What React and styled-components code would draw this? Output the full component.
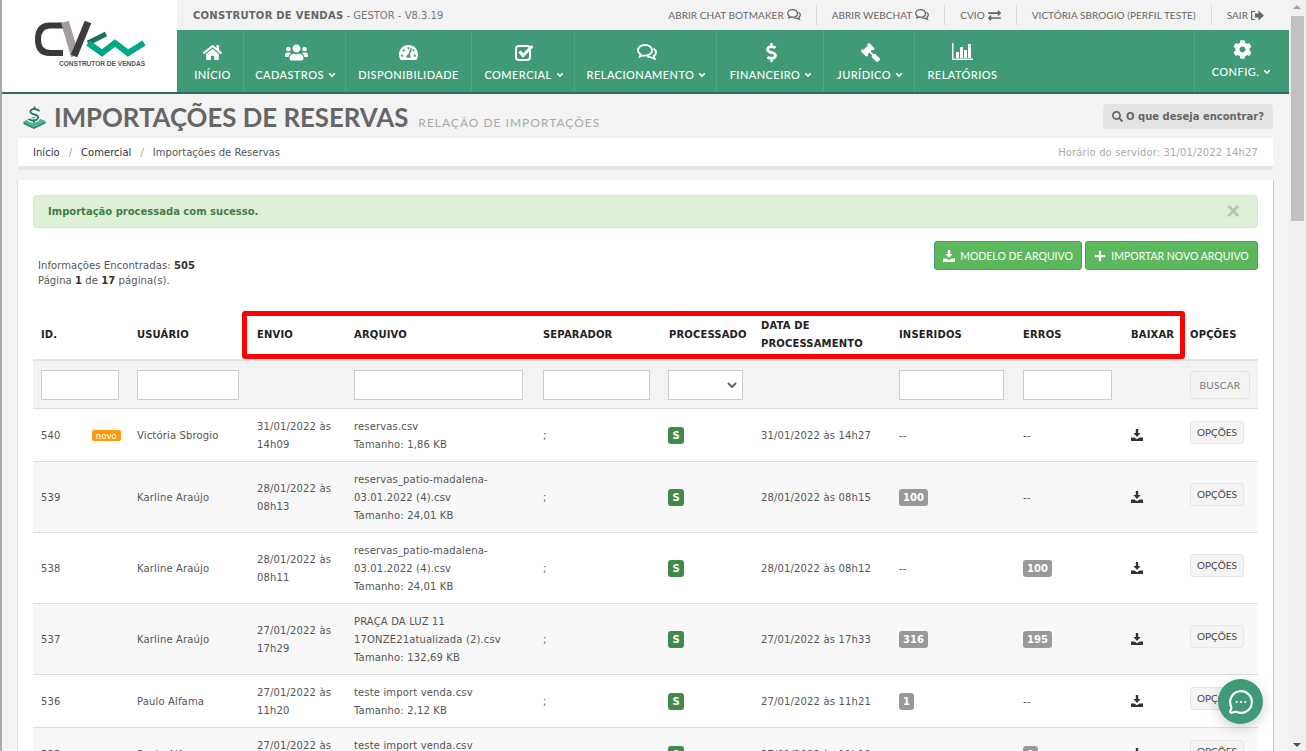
import React from "react";
import styled, { createGlobalStyle } from "styled-components";
import {
  FaHome,
  FaUsers,
  FaTachometerAlt,
  FaDollarSign,
  FaGavel,
  FaCog,
  FaAngleDown,
  FaExchangeAlt,
  FaSearch,
  FaPlus,
} from "react-icons/fa";
import { MessageCircleMore } from "lucide-react";

const GlobalStyle = createGlobalStyle`
  html, body { margin: 0; padding: 0; height: 100%; overflow: hidden; }
  body { background: #f3f3f3; font-family: "DejaVu Sans", Verdana, sans-serif; font-size: 10px; color: #444; }
  * { box-sizing: border-box; }
`;

const Window = styled.div`
  position: relative;
  width: 1306px;
  height: 751px;
  display: flex;
  overflow: hidden;
  background: #f3f3f3;
  border-left: 2px solid #a8a8a8;
`;

const Main = styled.div`
  width: 1287px;
  flex: none;
`;

/* ---------- header ---------- */
const Header = styled.header`
  display: flex;
  height: 94px;
`;

const LogoBox = styled.div`
  width: 175px;
  background: #fff;
  border-bottom: 2px solid #2f6b5e;
  padding: 18px 0 0 28px;
`;

const HeaderRight = styled.div`
  flex: 1;
  display: flex;
  flex-direction: column;
`;

const TopBar = styled.div`
  height: 30px;
  display: flex;
  align-items: center;
  justify-content: space-between;
  padding: 0 10px 0 16px;
  font-family: "Lato", sans-serif;
  font-size: 10px;
  color: #666;
`;

const Brand = styled.div`
  font-family: "DejaVu Sans", sans-serif;
  font-size: 10px;
  color: #777;
  b { color: #666; font-weight: bold; letter-spacing: 0.25px; }
`;

const TopLinks = styled.div`
  display: flex;
  align-items: center;
  height: 20px;
`;

const TopLink = styled.a`
  display: flex;
  align-items: center;
  gap: 3px;
  height: 20px;
  padding: 0 ${(p) => p.$pad || 15}px;
  border-left: ${(p) => (p.$first ? "none" : "1px solid #d8d8d8")};
  white-space: nowrap;
  letter-spacing: 0.05px;
  svg { color: #666; }
`;

const Nav = styled.nav`
  height: 64px;
  display: flex;
  background: #3f9a75;
  border-bottom: 2px solid #2f6b5e;
`;

const NavItem = styled.a`
  width: ${(p) => p.$w}px;
  margin-left: ${(p) => (p.$push ? "auto" : "0")};
  flex: none;
  display: flex;
  flex-direction: column;
  align-items: center;
  color: #fff;
  font-family: "Lato", sans-serif;
  font-size: 11px;
  font-weight: 500;
  letter-spacing: 0.45px;
  white-space: nowrap;
  padding-top: ${(p) => (p.$push ? "9px" : "12px")};
  padding-left: ${(p) => p.$shift || 0}px;
  border-right: ${(p) => (p.$push || p.$last ? "none" : "1px solid #4ba682")};
  border-left: ${(p) => (p.$push ? "1px solid #4ba682" : "none")};
`;

const NavIcon = styled.div`
  height: 20px;
  display: flex;
  align-items: center;
  justify-content: center;
  font-size: ${(p) => p.$size || 18}px;
`;

const NavLabel = styled.div`
  margin-top: 6px;
  line-height: 14px;
  display: flex;
  align-items: center;
  gap: 3px;
  svg { font-size: 10px; }
`;

const FlippedGavel = styled(FaGavel)`
  transform: scaleX(-1);
`;

/* ---------- title ---------- */
const TitleRow = styled.div`
  height: 44px;
  display: flex;
  align-items: flex-start;
  padding: 12px 16px 0 21px;
`;

const PageTitle = styled.h1`
  margin: -5px 0 0 8px;
  font-family: "Lato", sans-serif;
  font-size: 25.8px;
  line-height: 32px;
  font-weight: 700;
  color: #666;
  white-space: nowrap;
`;

const SubTitle = styled.span`
  margin: 7px 0 0 10px;
  font-family: "Lato", sans-serif;
  font-size: 12px;
  line-height: 20px;
  letter-spacing: 1px;
  color: #aaa;
  white-space: nowrap;
`;

const SearchButton = styled.a`
  margin: -2px 0 0 auto;
  width: 170px;
  height: 25px;
  display: flex;
  align-items: center;
  justify-content: center;
  gap: 3px;
  background: #e4e4e4;
  border-radius: 4px;
  font-weight: bold;
  font-size: 10px;
  color: #666;
`;

const Breadcrumb = styled.div`
  margin: 0 16px;
  height: 32px;
  padding: 0 15px;
  display: flex;
  align-items: center;
  background: #fff;
  border-bottom: 4px solid #e6e6e6;
  color: #333;
  letter-spacing: 0.03px;
`;

const Crumb = styled.span`
  color: ${(p) => (p.$muted ? "#555" : "#333")};
`;

const CrumbSep = styled.span`
  margin: 0 9px;
  color: #999;
`;

const ServerTime = styled.span`
  margin-left: auto;
  color: #aaa;
  letter-spacing: 0.12px;
`;

/* ---------- card ---------- */
const Card = styled.section`
  position: relative;
  margin: 10px 15px 0 15px;
  padding: 15px 15px 0 15px;
  background: #fff;
  border-left: 1px solid #ddd;
  border-right: 1px solid #ccc;
  height: 600px;
`;

const Alert = styled.div`
  height: 33px;
  display: flex;
  align-items: center;
  justify-content: space-between;
  padding: 0 17px 0 14px;
  background: #dff0d8;
  border: 1px solid #d6e9c6;
  border-radius: 4px;
  color: #3f7f42;
  font-weight: bold;
`;

const CloseMark = styled.span`
  font-family: "Liberation Sans", sans-serif;
  font-size: 23px;
  font-weight: bold;
  color: #b4c4ae;
`;

const ToolRow = styled.div`
  display: flex;
  justify-content: space-between;
  margin-top: 13px;
  height: 69px;
`;

const Info = styled.div`
  padding: 17px 0 0 5px;
  line-height: 15px;
  color: #555;
  letter-spacing: 0.08px;
  b { color: #333; }
`;

const ToolButtons = styled.div`
  display: flex;
  gap: 3px;
  align-items: flex-start;
`;

const GreenButton = styled.a`
  height: 29px;
  width: ${(p) => p.$w}px;
  display: flex;
  align-items: center;
  justify-content: center;
  gap: 5px;
  background: #5cb85c;
  border: 1px solid #4a9a6a;
  border-radius: 3px;
  color: #fff;
  font-family: "Lato", sans-serif;
  font-size: 10.5px;
  white-space: nowrap;
`;

/* ---------- table ---------- */
const TableWrap = styled.div`
  position: relative;
`;

const RedFrame = styled.div`
  position: absolute;
  left: 209px;
  top: 1px;
  width: 943px;
  height: 48px;
  border: 5px solid #f00;
  border-radius: 3px;
  pointer-events: none;
`;

const Table = styled.table`
  width: 1225px;
  table-layout: fixed;
  border-collapse: collapse;
`;

const Th = styled.th`
  height: 50px;
  padding: 0 8px;
  text-align: left;
  font-size: 10px;
  line-height: 18px;
  font-weight: bold;
  color: #222;
  letter-spacing: 0.15px;
`;

const FilterRow = styled.tr`
  background: #f3f3f3;
  border-top: 2px solid #e2e2e2;
  border-bottom: 1px solid #ddd;
`;

const FilterCell = styled.td`
  height: 48px;
  padding: 2px 8px 0;
  vertical-align: middle;
`;

const FilterInput = styled.input`
  display: block;
  width: ${(p) => p.$w}px;
  height: 30px;
  background: #fff;
  border: 1px solid #ccc;
  padding: 0 4px;
`;

const FilterSelect = styled.select`
  display: block;
  width: 75px;
  height: 30px;
  margin-left: -1px;
  appearance: none;
  background: #fff url("data:image/svg+xml,%3Csvg xmlns='http://www.w3.org/2000/svg' width='10' height='6'%3E%3Cpath d='M1 1l4 4 4-4' fill='none' stroke='%23666' stroke-width='2'/%3E%3C/svg%3E") no-repeat right 5px center;
  border: 1px solid #ccc;
  border-radius: 0;
`;

const SearchBtn = styled.button`
  width: 60px;
  height: 28px;
  background: #f3f3f3;
  border: 1px solid #e3e3e3;
  border-radius: 3px;
  font-family: "Lato", sans-serif;
  font-size: 10px;
  letter-spacing: 0.3px;
  color: #777;
`;

const Row = styled.tr`
  background: ${(p) => (p.$odd ? "#f8f8f8" : "#fff")};
  border-bottom: 1px solid #ddd;
`;

const Td = styled.td`
  padding: 9px 8px 7px;
  line-height: 18px;
  color: #555;
  letter-spacing: 0.15px;
  vertical-align: middle;
`;

const NewBadge = styled.span`
  display: inline-block;
  width: 29px;
  height: 11px;
  background: #ff9a0c;
  border-radius: 2px;
  color: #fff;
  font-family: "Lato", sans-serif;
  font-size: 9px;
  line-height: 11px;
  text-align: center;
  letter-spacing: 0.3px;
  vertical-align: middle;
`;

const Pill = styled.span`
  display: inline-block;
  padding: 0 4px;
  min-width: 15px;
  height: 17px;
  line-height: 17px;
  border-radius: 3px;
  background: #999;
  color: #fff;
  font-weight: bold;
  text-align: center;
  letter-spacing: 0;
  vertical-align: middle;
`;

const StatusPill = styled(Pill)`
  width: 16px;
  padding: 0;
  margin-left: -1px;
  background: #428a4b;
`;

const DownloadCell = styled.span`
  display: block;
  height: 13px;
  svg { display: block; }
`;

const RowButton = styled.a`
  display: block;
  width: 54px;
  height: 23px;
  margin: -1px 0 6px;
  background: #f4f4f4;
  border: 1px solid #e6e6e6;
  border-radius: 3px;
  color: #444;
  font-family: "Lato", sans-serif;
  font-size: 10px;
  line-height: 21px;
  letter-spacing: 0;
  text-align: center;
`;

/* ---------- overlays ---------- */
const ChatBubble = styled.a`
  position: absolute;
  left: 1216px;
  top: 679px;
  width: 45px;
  height: 45px;
  display: flex;
  align-items: center;
  justify-content: center;
  border-radius: 50%;
  background: #3f9a75;
  color: #fff;
  box-shadow: 0 4px 14px rgba(0, 0, 0, 0.18);
`;

const ScrollBar = styled.div`
  flex: none;
  width: 17px;
  background: #f0f0f0;
  position: relative;
  display: flex;
  flex-direction: column;
  align-items: center;
`;

const ScrollThumb = styled.div`
  margin-top: 16px;
  width: 13px;
  height: 205px;
  background: #c1c1c1;
`;

const Arrow = styled.div`
  position: absolute;
  left: 4px;
  width: 0;
  height: 0;
  border-left: 4px solid transparent;
  border-right: 4px solid transparent;
  ${(p) => (p.$down ? "bottom: 4px; border-top: 4px solid #505050;" : "top: 5px; border-bottom: 4px solid #a3a3a3;")}
`;

/* ---------- drawings ---------- */
const Logo = () => (
  <svg width="120" height="52" viewBox="0 0 120 52">
    <path d="M33 7.5 H20 Q8 7.5 8 21.5 Q8 35 20 35 H33" fill="none" stroke="#3a3a38" strokeWidth="6" />
    <path d="M35 4 L45 38" fill="none" stroke="#a39c9a" strokeWidth="8" />
    <path d="M58 4 L44 38" fill="none" stroke="#3a3d3a" strokeWidth="7" />
    <path d="M58 25 L76 16" fill="none" stroke="#1f6e5b" strokeWidth="5" />
    <path d="M58 25 L72 35 L85 25 L98 35 L114 25" fill="none" stroke="#00a884" strokeWidth="6" />
    <text x="29" y="48" fontFamily="Liberation Sans, sans-serif" fontSize="6.5" fontWeight="bold" textLength="86" fill="#555">
      CONSTRUTOR DE VENDAS
    </text>
  </svg>
);

const MoneyIcon = () => (
  <svg width="23" height="23" viewBox="0 0 23 23">
    <path d="M0.5 15.5 L11 21 L22.5 15 V17.5 L11 23 L0.5 18 Z" fill="#2a8a68" />
    <path d="M0.5 15.5 L11 10.5 L22.5 15 L11 21 Z" fill="#4fb08e" />
    <path d="M16.5 5 Q12 1.5 8 4 Q6 6.5 10 8 L13.5 9.2 Q16.5 11 14 13.5 Q10 16 5.5 13" fill="none" stroke="#fff" strokeWidth="4.2" />
    <path d="M16.5 5 Q12 1.5 8 4 Q6 6.5 10 8 L13.5 9.2 Q16.5 11 14 13.5 Q10 16 5.5 13" fill="none" stroke="#2a7a60" strokeWidth="2" />
    <path d="M11.5 0.5 V3 M11 13.5 V16.5" stroke="#2a7a60" strokeWidth="2" />
  </svg>
);

const BarsIcon = () => (
  <svg width="22" height="18" viewBox="0 0 22 18" fill="#fff">
    <rect x="0" y="0" width="1.5" height="17" />
    <rect x="0" y="15.5" width="21" height="1.5" />
    <rect x="4" y="9" width="3" height="6" />
    <rect x="8" y="4" width="3" height="11" />
    <rect x="12" y="7" width="3" height="8" />
    <rect x="16" y="1" width="3" height="14" />
  </svg>
);

const CheckIcon = () => (
  <svg width="20" height="18" viewBox="0 0 20 18" fill="none" stroke="#fff">
    <rect x="1" y="3" width="14" height="14" rx="3" strokeWidth="2" />
    <path d="M4.5 8.5 L8 12.5 L17.5 3" strokeWidth="3" />
  </svg>
);

const CommentsIcon = ({ size = 20 }) => (
  <svg width={size} height={size * 0.8} viewBox="0 0 20 16" fill="none" stroke="currentColor" strokeWidth="1.8">
    <path d="M8 1 C3.8 1 1 3.4 1 6.3 C1 8 2 9.4 3.6 10.4 L2.8 12.6 L6 11.4 C6.7 11.6 7.3 11.6 8 11.6 C12.2 11.6 15 9.2 15 6.3 C15 3.4 12.2 1 8 1 Z" />
    <path d="M16.5 4.6 C18.2 5.6 19 7 19 8.4 C19 10 18 11.2 16.8 12 L17.8 14.8 L13.6 13.2 C12.4 13.2 11.2 13 10.2 12.4" />
  </svg>
);

const TrayIcon = ({ size = 12, color = "#333" }) => (
  <svg width={size} height={size} viewBox="0 0 12 12" fill={color}>
    <path d="M4.8 0 H7.2 V4 H9.6 L6 8 L2.4 4 H4.8 Z" />
    <path d="M0 8.4 H3.4 L6 10.2 L8.6 8.4 H12 V12 H0 Z" />
  </svg>
);

const SignOutIcon = () => (
  <svg width="13" height="11" viewBox="0 0 13 11" fill="#666">
    <path d="M0 1 H4 V2 H1.2 V9 H4 V10 H0 Z" />
    <path d="M4 3.5 H7.5 V0.5 L13 5.5 L7.5 10.5 V7.5 H4 Z" />
  </svg>
);

/* ---------- data ---------- */
const navItems = [
  { label: "INÍCIO", w: 67, icon: <FaHome />, size: 19, shift: 5 },
  { label: "CADASTROS", w: 102, icon: <FaUsers />, size: 23, caret: true, shift: 3 },
  { label: "DISPONIBILIDADE", w: 126, icon: <FaTachometerAlt />, size: 19 },
  { label: "COMERCIAL", w: 103, icon: <CheckIcon />, caret: true, shift: 3 },
  { label: "RELACIONAMENTO", w: 142, icon: <CommentsIcon />, caret: true, shift: 3 },
  { label: "FINANCEIRO", w: 107, icon: <FaDollarSign />, size: 19, caret: true, shift: 3 },
  { label: "JURÍDICO", w: 91, icon: <FlippedGavel />, size: 19, caret: true, shift: 3 },
  { label: "RELATÓRIOS", w: 95, icon: <BarsIcon />, last: true },
];

const rows = [
  { id: 540, isNew: true, user: "Victória Sbrogio", sent: ["31/01/2022 às", "14h09"], file: ["reservas.csv", "Tamanho: 1,86 KB"], done: "31/01/2022 às 14h27" },
  { id: 539, user: "Karline Araújo", sent: ["28/01/2022 às", "08h13"], file: ["reservas_patio-madalena-", "03.01.2022 (4).csv", "Tamanho: 24,01 KB"], done: "28/01/2022 às 08h15", ins: 100 },
  { id: 538, user: "Karline Araújo", sent: ["28/01/2022 às", "08h11"], file: ["reservas_patio-madalena-", "03.01.2022 (4).csv", "Tamanho: 24,01 KB"], done: "28/01/2022 às 08h12", err: 100 },
  { id: 537, user: "Karline Araújo", sent: ["27/01/2022 às", "17h29"], file: ["PRAÇA DA LUZ 11", "17ONZE21atualizada (2).csv", "Tamanho: 132,69 KB"], done: "27/01/2022 às 17h33", ins: 316, err: 195 },
  { id: 536, user: "Paulo Alfama", sent: ["27/01/2022 às", "11h20"], file: ["teste import venda.csv", "Tamanho: 2,12 KB"], done: "27/01/2022 às 11h21", ins: 1 },
  { id: 535, user: "Paulo Alfama", sent: ["27/01/2022 às", "11h18"], file: ["teste import venda.csv", "Tamanho: 2,12 KB"], done: "27/01/2022 às 11h19", err: 1 },
];

const colWidths = [51, 45, 120, 97, 189, 126, 92, 138, 124, 108, 59, 76];

const Lines = ({ items }) =>
  items.map((t, i) => (
    <React.Fragment key={i}>
      {t}
      {i < items.length - 1 && <br />}
    </React.Fragment>
  ));

const App = () => {
  return (
    <Window>
      <GlobalStyle />
      <Main>
        <Header>
          <LogoBox>
            <Logo />
          </LogoBox>
          <HeaderRight>
            <TopBar>
              <Brand>
                <b>CONSTRUTOR DE VENDAS</b> - GESTOR - V8.3.19
              </Brand>
              <TopLinks>
                <TopLink $first>
                  ABRIR CHAT BOTMAKER <CommentsIcon size={14} />
                </TopLink>
                <TopLink>
                  ABRIR WEBCHAT <CommentsIcon size={14} />
                </TopLink>
                <TopLink>
                  CVIO <FaExchangeAlt size={13} />
                </TopLink>
                <TopLink>VICTÓRIA SBROGIO (PERFIL TESTE)</TopLink>
                <TopLink>
                  SAIR <SignOutIcon />
                </TopLink>
              </TopLinks>
            </TopBar>
            <Nav>
              {navItems.map((n) => (
                <NavItem key={n.label} $w={n.w} $shift={n.shift} $last={n.last}>
                  <NavIcon $size={n.size}>{n.icon}</NavIcon>
                  <NavLabel>
                    {n.label}
                    {n.caret && <FaAngleDown />}
                  </NavLabel>
                </NavItem>
              ))}
              <NavItem $w={95} $push>
                <NavIcon $size={19}>
                  <FaCog />
                </NavIcon>
                <NavLabel>
                  CONFIG.
                  <FaAngleDown />
                </NavLabel>
              </NavItem>
            </Nav>
          </HeaderRight>
        </Header>

        <TitleRow>
          <MoneyIcon />
          <PageTitle>IMPORTAÇÕES DE RESERVAS</PageTitle>
          <SubTitle>RELAÇÃO DE IMPORTAÇÕES</SubTitle>
          <SearchButton>
            <FaSearch size={11} /> O que deseja encontrar?
          </SearchButton>
        </TitleRow>

        <Breadcrumb>
          <Crumb>Início</Crumb>
          <CrumbSep>/</CrumbSep>
          <Crumb>Comercial</Crumb>
          <CrumbSep>/</CrumbSep>
          <Crumb $muted>Importações de Reservas</Crumb>
          <ServerTime>Horário do servidor: 31/01/2022 14h27</ServerTime>
        </Breadcrumb>

        <Card>
          <Alert>
            Importação processada com sucesso.
            <CloseMark>×</CloseMark>
          </Alert>
          <ToolRow>
            <Info>
              Informações Encontradas: <b>505</b>
              <br />
              Página <b>1</b> de <b>17</b> página(s).
            </Info>
            <ToolButtons>
              <GreenButton $w={148}>
                <TrayIcon color="#fff" /> MODELO DE ARQUIVO
              </GreenButton>
              <GreenButton $w={173}>
                <FaPlus size={12} /> IMPORTAR NOVO ARQUIVO
              </GreenButton>
            </ToolButtons>
          </ToolRow>
          <TableWrap>
            <Table>
              <colgroup>
                {colWidths.map((w, i) => (
                  <col key={i} width={w} />
                ))}
              </colgroup>
              <thead>
                <tr>
                  <Th colSpan={2}>ID.</Th>
                  <Th>USUÁRIO</Th>
                  <Th>ENVIO</Th>
                  <Th>ARQUIVO</Th>
                  <Th>SEPARADOR</Th>
                  <Th>PROCESSADO</Th>
                  <Th>DATA DE PROCESSAMENTO</Th>
                  <Th>INSERIDOS</Th>
                  <Th>ERROS</Th>
                  <Th>BAIXAR</Th>
                  <Th>OPÇÕES</Th>
                </tr>
              </thead>
              <tbody>
                <FilterRow>
                  <FilterCell colSpan={2}>
                    <FilterInput $w={78} />
                  </FilterCell>
                  <FilterCell>
                    <FilterInput $w={102} />
                  </FilterCell>
                  <FilterCell />
                  <FilterCell>
                    <FilterInput $w={169} />
                  </FilterCell>
                  <FilterCell>
                    <FilterInput $w={107} />
                  </FilterCell>
                  <FilterCell>
                    <FilterSelect />
                  </FilterCell>
                  <FilterCell />
                  <FilterCell>
                    <FilterInput $w={105} />
                  </FilterCell>
                  <FilterCell>
                    <FilterInput $w={89} />
                  </FilterCell>
                  <FilterCell />
                  <FilterCell>
                    <SearchBtn>BUSCAR</SearchBtn>
                  </FilterCell>
                </FilterRow>
                {rows.map((r, i) => (
                  <Row key={r.id} $odd={i % 2 === 1}>
                    <Td>{r.id}</Td>
                    <Td>{r.isNew && <NewBadge>novo</NewBadge>}</Td>
                    <Td>{r.user}</Td>
                    <Td>
                      <Lines items={r.sent} />
                    </Td>
                    <Td>
                      <Lines items={r.file} />
                    </Td>
                    <Td>;</Td>
                    <Td>
                      <StatusPill>S</StatusPill>
                    </Td>
                    <Td>{r.done}</Td>
                    <Td>{r.ins ? <Pill>{r.ins}</Pill> : "--"}</Td>
                    <Td>{r.err ? <Pill>{r.err}</Pill> : "--"}</Td>
                    <Td>
                      <DownloadCell>
                        <TrayIcon />
                      </DownloadCell>
                    </Td>
                    <Td>
                      <RowButton>OPÇÕES</RowButton>
                    </Td>
                  </Row>
                ))}
              </tbody>
            </Table>
            <RedFrame />
          </TableWrap>
        </Card>
      </Main>
      <ScrollBar>
        <Arrow />
        <ScrollThumb />
        <Arrow $down />
      </ScrollBar>
      <ChatBubble>
        <MessageCircleMore size={26} strokeWidth={2} />
      </ChatBubble>
    </Window>
  );
};

export default App;
